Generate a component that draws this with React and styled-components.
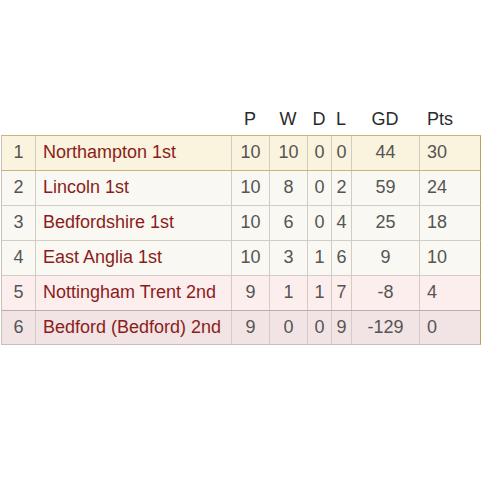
import React from "react";
import styled, { createGlobalStyle, css } from "styled-components";

const Global = createGlobalStyle`
  html, body { margin: 0; padding: 0; background: #ffffff; }
  body { font-family: "Liberation Sans", Arial, sans-serif; }
`;

const COLS = "33px 196px 38px 38px 24px 20px 68px 61px";

const Page = styled.div`
  width: 481px;
  height: 481px;
  padding-top: 101px;
  padding-left: 1px;
  box-sizing: border-box;
`;

const Table = styled.div`
  width: 480px;
  display: flex;
  flex-direction: column;
`;

const HeadRow = styled.div`
  display: grid;
  grid-template-columns: ${COLS};
  height: 34px;
  box-sizing: border-box;
  padding: 2px 1px 0 1px;
  align-items: center;
  font-size: 18px;
  color: #2a2a2a;
`;

const HeadCell = styled.div`
  text-align: ${(p) => p.$align || "center"};
  padding-left: ${(p) => (p.$align === "left" ? "8px" : "0")};
`;

const variants = {
  top: css`
    background: #faf3dd;
    border-top: 1px solid #c9b57c;
  `,
  mid: css`
    background: #faf8f2;
    border-top: 1px solid #d2cdc4;
  `,
  midFirst: css`
    background: #faf8f2;
    border-top: 1px solid #c9b57c;
  `,
  down: css`
    background: #fdeeee;
    border-top: 1px solid #d6cbcb;
  `,
  bottom: css`
    background: #f2e4e4;
    border-top: 1px solid #b6adad;
    border-bottom: 1px solid #c8bebe;
  `,
};

const Row = styled.div`
  display: grid;
  grid-template-columns: ${COLS};
  height: 35px;
  box-sizing: border-box;
  font-size: 18px;
  color: #555555;
  border-left: 1px solid #c8c2b8;
  border-right: 1px solid #bba35c;
  ${(p) => variants[p.$variant]}
`;

const Cell = styled.div`
  display: flex;
  align-items: center;
  justify-content: ${(p) =>
    p.$align === "left" ? "flex-start" : "center"};
  padding-left: ${(p) => (p.$align === "left" ? "7px" : "0")};
  padding-bottom: 1px;
  border-left: ${(p) => (p.$first ? "none" : "1px solid #d2cdc4")};
  white-space: nowrap;
  overflow: hidden;
`;

const Team = styled(Cell)`
  color: #8b1c1c;
`;

const rows = [
  [1, "Northampton 1st", 10, 10, 0, 0, 44, 30, "top"],
  [2, "Lincoln 1st", 10, 8, 0, 2, 59, 24, "midFirst"],
  [3, "Bedfordshire 1st", 10, 6, 0, 4, 25, 18, "mid"],
  [4, "East Anglia 1st", 10, 3, 1, 6, 9, 10, "mid"],
  [5, "Nottingham Trent 2nd", 9, 1, 1, 7, -8, 4, "down"],
  [6, "Bedford (Bedford) 2nd", 9, 0, 0, 9, -129, 0, "bottom"],
];

export default function App() {
  return (
    <Page>
      <Global />
      <Table>
        <HeadRow>
          <HeadCell />
          <HeadCell />
          <HeadCell>P</HeadCell>
          <HeadCell>W</HeadCell>
          <HeadCell>D</HeadCell>
          <HeadCell>L</HeadCell>
          <HeadCell>GD</HeadCell>
          <HeadCell $align="left">Pts</HeadCell>
        </HeadRow>
        {rows.map(([pos, team, p, w, d, l, gd, pts, v]) => (
          <Row key={pos} $variant={v}>
            <Cell $first>{pos}</Cell>
            <Team $align="left">{team}</Team>
            <Cell>{p}</Cell>
            <Cell>{w}</Cell>
            <Cell>{d}</Cell>
            <Cell>{l}</Cell>
            <Cell>{gd}</Cell>
            <Cell $align="left">{pts}</Cell>
          </Row>
        ))}
      </Table>
    </Page>
  );
}
